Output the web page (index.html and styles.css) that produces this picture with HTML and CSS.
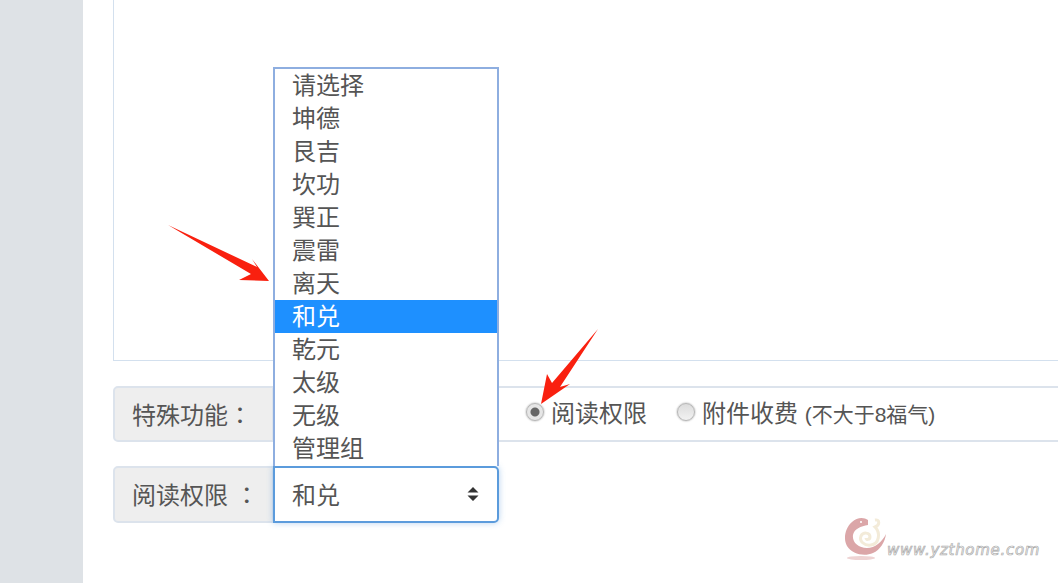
FILE: index.html
```html
<!DOCTYPE html>
<html lang="zh-CN">
<head>
  <meta charset="UTF-8">
  <title>阅读权限</title>
  <link rel="stylesheet" href="styles.css">
</head>
<body>
  <aside class="sidebar"></aside>
  <main class="content">
    <div class="editor"></div>

    <div class="input-group">
      <span class="addon">特殊功能<span class="colon">：</span></span>
      <div class="field radios">
        <label class="radio"><span class="dot checked"></span>阅读权限</label>
        <label class="radio"><span class="dot"></span>附件收费 <small>(不大于8福气)</small></label>
      </div>
    </div>

    <div class="input-group second">
      <span class="addon">阅读权限 <span class="colon">：</span></span>
      <div class="select">
        和兑
        <svg class="carets" width="12" height="16" viewBox="0 0 12 16"><path d="M6 1 L11.5 6.5 H0.5 Z M6 15 L0.5 9.5 H11.5 Z" fill="#333"/></svg>
      </div>
      <ul class="options">
        <li>请选择</li>
        <li>坤德</li>
        <li>艮吉</li>
        <li>坎功</li>
        <li>巽正</li>
        <li>震雷</li>
        <li>离天</li>
        <li class="selected">和兑</li>
        <li>乾元</li>
        <li>太级</li>
        <li>无级</li>
        <li>管理组</li>
      </ul>
    </div>
  </main>

  <!-- annotation arrows drawn over the screenshot -->
  <svg class="arrow arrow-left" width="110" height="62" viewBox="0 0 110 62"><path d="M1 1 L90 43 L85 35 L102 57 L72 56 L84 50 Z" fill="#f9200f"/></svg>
  <svg class="arrow arrow-right" width="62" height="78" viewBox="0 0 62 78"><path d="M60 1 L22 59 L32 56 L3 76 L9 46 L14 55 Z" fill="#f9200f"/></svg>

  <div class="watermark">
    <svg width="44" height="44" viewBox="0 0 44 44">
      <path d="M24 3 C20 0 13 0 8 5 C1 11 -1 22 3 29 C8 37 20 40 29 36 C36 33 41 25 42 17 C38 25 31 31 23 31 C14 31 8 25 9 18 C10 12 17 9 24 8 Z" fill="#dba6a8"/>
      <circle cx="17" cy="5" r="1" fill="#fff"/>
      <path d="M31 3 C36 2 36 8 31 10 C37 16 35 27 27 28 C20 29 15 24 17 19 C19 15 26 15 26 20 C26 23 22 23 22 21" fill="none" stroke="#f3ebd9" stroke-width="3"/>
      <ellipse cx="17" cy="41" rx="14" ry="2" fill="#eed3d3"/>
    </svg>
    <span class="site">www.yzthome.com</span>
  </div>
</body>
</html>
```

FILE: styles.css
```css
html, body { height: 100%; }
body {
  margin: 0; height: 583px; overflow: hidden; display: flex; position: relative;
  background: #fff; color: #555;
  font-family: "Liberation Sans", "Noto Sans CJK SC", sans-serif; font-size: 24px;
}
.sidebar { width: 83px; flex: none; background: #dee2e6; }
.content { flex: 1; padding-left: 30px; min-width: 0; }
.editor {
  height: 360px; border: 1px solid #d3e0ee; border-top: none; border-right: none;
  box-sizing: content-box;
}
.input-group { display: flex; height: 56px; margin-top: 25px; position: relative; margin-right: -4px; }
.input-group.second { margin-top: 24px; width: 386px; height: 57px; margin-right: 0; }
.addon {
  width: 161px; flex: none; box-sizing: border-box; padding-left: 17px; padding-bottom: 2px;
  display: flex; align-items: center; white-space: pre;
  background: #eee; border: 2px solid #dce3ec; border-radius: 5px 0 0 5px;
  color: #555;
}
.colon { font-family: "Noto Sans CJK TC", sans-serif; }
.field { flex: 1; border: 2px solid #dce3ec; border-left: none; }
.radios { display: flex; align-items: center; padding-left: 249px; gap: 29px; margin-left: 2px; }
.radio { display: flex; align-items: center; white-space: pre; line-height: 1; }
.radio small { font-size: 21px; }
.dot {
  width: 18px; height: 18px; box-sizing: border-box; border-radius: 50%; margin-right: 8px;
  position: relative; top: -2px; left: 1px;
  border: 1px solid #b5b5b5; background: linear-gradient(#dcdcdc, #f2f2f2);
  box-shadow: 0 0 2px #999;
}
.dot.checked { background: radial-gradient(circle, #666 0 4px, #e6e6e6 5px); }
.select {
  flex: 1; display: flex; align-items: center; justify-content: space-between;
  padding: 0 18px 2px 17px; margin-left: -1px;
  background: #fff; border: 2px solid #5b9bdc; border-radius: 0 5px 5px 0;
  box-shadow: 0 0 6px rgba(91, 155, 220, .45); box-sizing: border-box;
  color: #555;
}
.options {
  position: absolute; left: 160px; bottom: 57px; width: 226px; box-sizing: border-box;
  margin: 0; padding: 0 0 1px; list-style: none; background: #fff;
  border: 2px solid #8eaee0; border-bottom: none;
}
.options li { height: 33px; line-height: 33px; padding-left: 17px; color: #555; }
.options li.selected { background: #1e90ff; color: #fff; }
.arrow { position: absolute; }
.arrow-left { left: 167px; top: 224px; }
.arrow-right { left: 538px; top: 328px; }
.watermark { position: absolute; left: 844px; top: 517px; display: flex; align-items: flex-end; }
.site {
  font-family: "DejaVu Sans", sans-serif; font-style: italic; font-size: 15px; line-height: 18px;
  letter-spacing: .7px; color: #fff; margin-left: -1px; margin-bottom: 2px;
  -webkit-text-stroke: 0.7px #aaa;
}
```
